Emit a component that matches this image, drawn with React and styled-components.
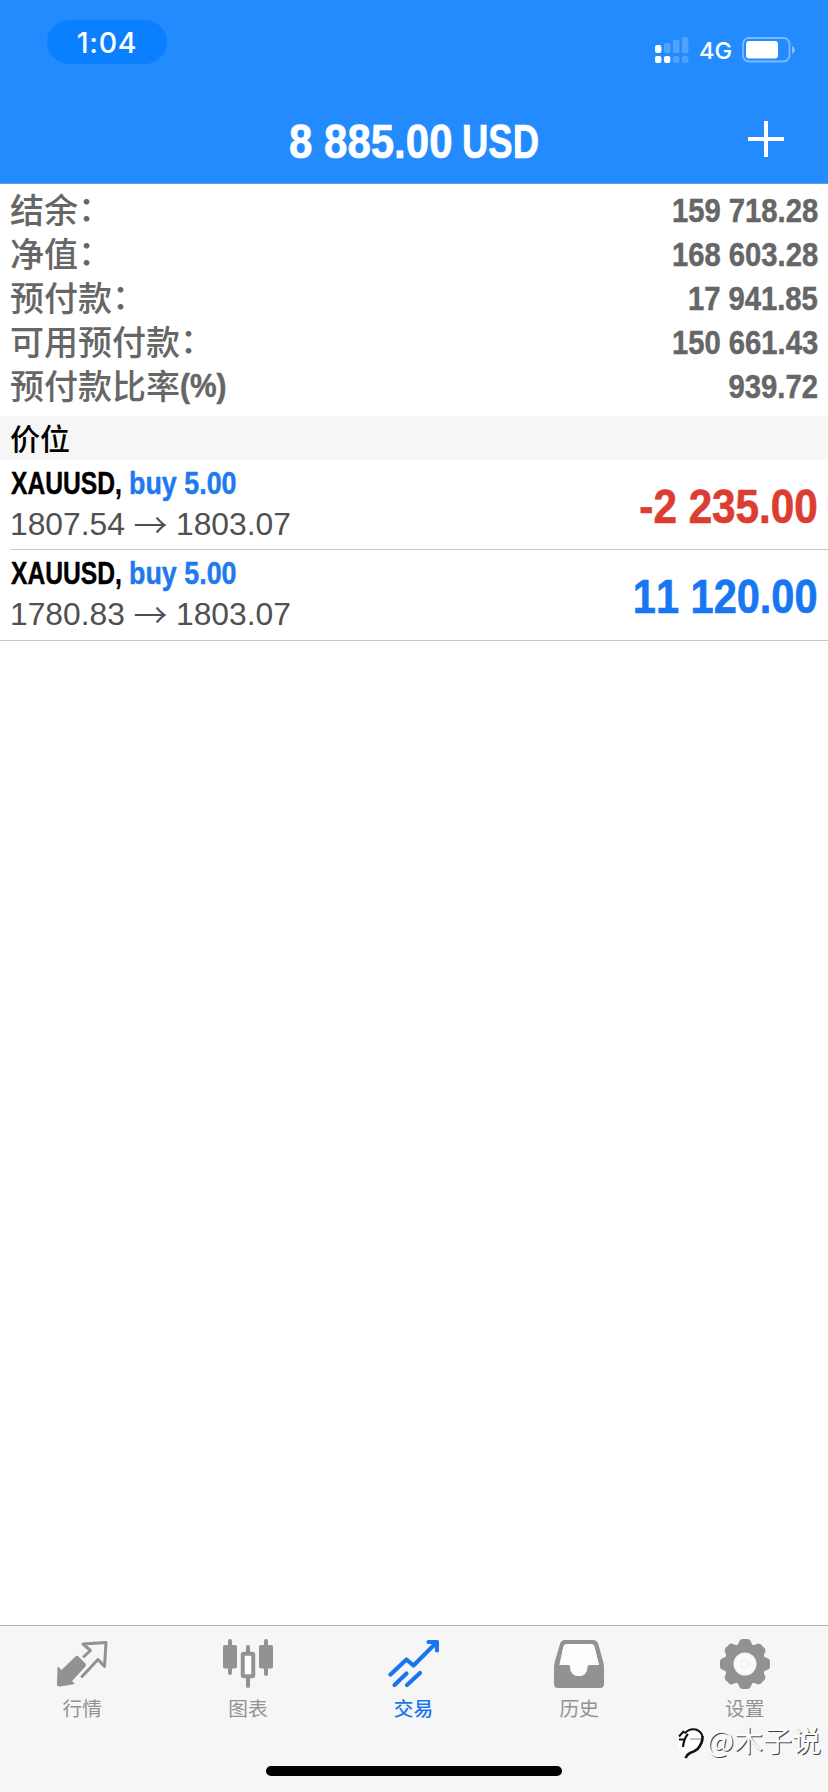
import React from "react";
import styled, { createGlobalStyle } from "styled-components";

const GlobalStyle = createGlobalStyle`
  body { margin: 0; background: #fff; }
  * { box-sizing: border-box; }
`;

const CJK = `"Noto Sans CJK SC", sans-serif`;
const SANS = `"Liberation Sans", "Noto Sans CJK SC", sans-serif`;
const UI = `Inter, "Noto Sans CJK SC", sans-serif`;

const Screen = styled.div`
  position: relative;
  width: 828px;
  height: 1792px;
  display: flex;
  flex-direction: column;
  overflow: hidden;
  background: #fff;
  font-family: ${SANS};
`;

const Condensed = styled.span`
  display: inline-block;
  width: ${(p) => (p.$width ? `${p.$width}px` : "auto")};
  font-family: ${SANS};
  font-weight: 700;
  font-size: ${(p) => p.$size}px;
  font-kerning: none;
  line-height: 1;
  white-space: pre;
  color: ${(p) => p.$color || "inherit"};
  -webkit-text-stroke: ${(p) => p.$size / 70}px currentColor;
  transform: scaleX(${(p) => p.$scale || 0.88});
  transform-origin: ${(p) => p.$origin || "left"} center;
`;

const Header = styled.header`
  height: 184px;
  background: #248bff;
  border-bottom: 1px solid #5d9fe6;
  color: #fff;
  display: flex;
  flex-direction: column;
`;

const StatusBar = styled.div`
  height: 96px;
  padding: 20px 32px 0 47px;
  display: flex;
  justify-content: space-between;
  align-items: flex-start;
  font-family: ${UI};
`;

const TimePill = styled.div`
  width: 120px;
  height: 44px;
  border-radius: 22px;
  background: #0a7fff;
  display: flex;
  align-items: center;
  justify-content: center;
  font-size: 28.5px;
  font-weight: 450;
  letter-spacing: 0.7px;
`;

const StatusIcons = styled.div`
  display: flex;
  align-items: center;
  height: 28px;
  margin-top: 16px;
`;

const Network = styled.span`
  font-size: 23.5px;
  font-weight: 450;
  line-height: 28px;
  margin: 2px 10px 0 10px;
`;

const NavBar = styled.div`
  flex: 1;
  display: grid;
  grid-template-columns: 100px 1fr 100px;
  align-items: center;
  justify-items: center;
`;

const NavTitle = styled.div`
  grid-column: 2;
  width: 250px;
  padding-top: 5px;
  white-space: nowrap;
`;

const AddButton = styled.button`
  border: 0;
  padding: 0;
  background: none;
  width: 36px;
  height: 36px;
  margin: 0 24px 1px 0;
  display: block;
  svg { display: block; }
`;

const Summary = styled.section`
  height: 232px;
  padding: 4px 10px 0;
  color: #666;
`;

const SummaryRow = styled.div`
  height: 44px;
  display: flex;
  align-items: center;
  justify-content: space-between;
`;

const SummaryLabel = styled.span`
  display: flex;
  align-items: center;
  font-family: ${CJK};
  font-size: 34px;
  font-weight: 500;
  line-height: 44px;
  height: 44px;
  margin-top: -2px;
`;

const Colon = styled.span`
  margin: -5px 0 0 0;
`;

const SectionTitle = styled.h2`
  margin: 0;
  height: 44px;
  padding-left: 10px;
  background: #f6f6f6;
  font: 500 30px/42px ${CJK};
  color: #000;
`;

const Position = styled.article`
  height: ${(p) => (p.$last ? 91 : 90)}px;
  margin-left: ${(p) => (p.$last ? 0 : 11)}px;
  padding: 7px 10px 0 ${(p) => (p.$last ? 11 : 0)}px;
  border-bottom: 1px solid #c6c6c8;
  display: flex;
  justify-content: space-between;
`;

const PositionInfo = styled.div`
  display: flex;
  flex-direction: column;
  align-items: flex-start;
`;

const Instrument = styled.div`
  display: flex;
`;

const Prices = styled.div`
  display: flex;
  align-items: center;
  margin-top: 8px;
  margin-left: -1px;
  font-size: 31.8px;
  font-kerning: none;
  line-height: 34px;
  color: #505050;
`;

const Arrow = styled.span`
  display: flex;
  justify-content: center;
  width: 51px;
  font-family: ${CJK};
  font-weight: 350;
  font-size: 34px;
`;

const Profit = styled.div`
  padding-top: 16px;
`;

const Spacer = styled.main`
  flex: 1;
`;

const TabBar = styled.nav`
  height: 167px;
  border-top: 1px solid #b2b2b2;
  background: #f6f6f6;
  display: flex;
  flex-direction: column;
  align-items: center;
`;

const Tabs = styled.div`
  width: 100%;
  height: 140px;
  display: grid;
  grid-template-columns: repeat(5, 1fr);
`;

const Tab = styled.div`
  display: flex;
  flex-direction: column;
  align-items: center;
  padding: 12px 1px 0 0;
  color: ${(p) => (p.$active ? "#1a76ec" : "#929292")};
  font: ${(p) => (p.$active ? 500 : 400)} 19.7px/28px ${CJK};
  svg { display: block; margin-bottom: 4px; }
`;

const HomeIndicator = styled.div`
  width: 296px;
  height: 10px;
  border-radius: 5px;
  background: #000;
`;

const Watermark = styled.div`
  position: absolute;
  right: 7px;
  bottom: 32px;
  display: flex;
  align-items: center;
  gap: 1px;
  font: 400 29px/40px ${CJK};
  color: #fcfcfc;
  text-shadow: 1px 1px 0 #444;
  svg { margin-top: 8px; }
`;

const SignalIcon = () => (
  <svg width="34" height="28" viewBox="0 0 34 28" fill="#fff">
    <rect x="0" y="9" width="6.4" height="8" rx="2" />
    <g opacity=".2">
      <rect x="9" y="7" width="6.4" height="10" rx="1.5" />
      <rect x="18" y="4" width="6.4" height="13" rx="1.5" />
      <rect x="27" y="1" width="6.4" height="16" rx="1.5" />
      <rect x="18" y="20" width="6.4" height="7" rx="2" />
      <rect x="27" y="20" width="6.4" height="7" rx="2" />
    </g>
    <rect x="0" y="20" width="6.4" height="7" rx="2" />
    <rect x="9" y="20" width="6.4" height="7" rx="2" />
  </svg>
);

const BatteryIcon = () => (
  <svg width="54" height="26" viewBox="0 0 54 26">
    <rect x="1" y="1" width="46.5" height="23.5" rx="6" fill="none" stroke="#fff" strokeOpacity=".4" strokeWidth="1.8" />
    <rect x="4" y="4" width="32" height="17.5" rx="3" fill="#fff" />
    <path d="M50 9 Q53 10.5 53 13 T50 17Z" fill="#fff" fillOpacity=".45" />
  </svg>
);

const PlusIcon = () => (
  <svg width="36" height="36" viewBox="0 0 36 36" stroke="#fff" strokeWidth="4">
    <path d="M18 0V36M0 18H36" />
  </svg>
);

const QuotesIcon = () => (
  <svg width="52" height="52" viewBox="0 0 52 52">
    <path d="M1.500 29.500Q1.500 28 3 29.500L5.500 32 19.500 18.500Q21 17 22.500 18.500L29.500 25.500Q30.500 27 29.500 28.500L16 43 19 46 4 48.500Q1 49 1 46Z" fill="currentColor" />
    <path d="M28 18.500 34.500 12.500 27 6 50 4.500 48.500 28.500 42 21.500 26 38.500" fill="none" stroke="currentColor" strokeWidth="3" strokeLinecap="round" strokeLinejoin="round" />
  </svg>
);

const ChartIcon = () => (
  <svg width="52" height="52" viewBox="0 0 52 52" fill="currentColor">
    <rect x="1" y="7" width="14" height="23.500" rx="2" />
    <rect x="6" y="1" width="4" height="36" rx="2" />
    <rect x="37" y="7" width="14" height="23.500" rx="2" />
    <rect x="42" y="1" width="4" height="37" rx="2" />
    <rect x="24" y="7" width="4" height="10" rx="2" />
    <rect x="24" y="38" width="4" height="12" rx="2" />
    <rect x="20.750" y="15.750" width="10.500" height="22.500" rx="1" fill="#fff" stroke="currentColor" strokeWidth="4" />
  </svg>
);

const TradeIcon = () => (
  <svg width="52" height="52" viewBox="0 0 52 52" fill="none" stroke="currentColor" strokeWidth="4.200" strokeLinecap="round" strokeLinejoin="round">
    <path d="M3.500 36.500 19.500 21.500 26.500 27.500 49.500 4.500M41.500 4H50V12.500" />
    <path d="M7.500 47 19.500 35.500M20 47 33 35" />
  </svg>
);

const HistoryIcon = () => (
  <svg width="52" height="52" viewBox="0 0 52 52">
    <path fill="currentColor" fillRule="evenodd" d="M12 2H40Q44 2 45.300 6L50 23Q51 26 51 30V46Q51 50 47 50H5Q1 50 1 46V30Q1 26 2 23L7 6Q8 2 12 2ZM14 6Q11 6 10.300 9L6.500 27H16Q17 27 17 28.500Q17.500 38 26 38Q34 38 34.500 28.500Q34.500 27 36 27H46L41.500 9Q41 6 38 6Z" />
    <path fill="#fff" fillOpacity=".8" d="M14 6Q11 6 10.300 9L6.500 27H16Q17 27 17 28.500Q17.500 38 26 38Q34 38 34.500 28.500Q34.500 27 36 27H46L41.500 9Q41 6 38 6Z" />
  </svg>
);

const SettingsIcon = () => (
  <svg width="52" height="52" viewBox="-26 -26 52 52" fill="currentColor">
    <circle r="16" fill="none" stroke="currentColor" strokeWidth="9" />
    {[0, 45, 90, 135, 180, 225, 270, 315].map((a) => (
      <path key={a} transform={`rotate(${a})`} d="M-9 -17Q-7 -19 -6 -22Q-5 -25 -2.500 -25H2.500Q5 -25 6 -22Q7 -19 9 -17Z" />
    ))}
    <circle r="10" fill="#fbfbfb" />
    <circle r="4" fill="none" stroke="#eee" />
  </svg>
);

const WatermarkLogo = () => (
  <svg width="30" height="34" viewBox="0 0 30 34" fill="none">
    <circle cx="14.500" cy="14.500" r="13" fill="#fff" />
    <path d="M3 10.500 8 5M8.500 7.500Q13 2 20 3.500Q26 6 26.500 11" stroke="#111" strokeWidth="2" />
    <path d="M26.500 10Q27 17 21.500 23Q19 25.500 14 27Q11 28.500 9.500 32" stroke="#111" strokeWidth="2.600" />
    <path d="M12 8Q8 12 7 21M3 13.500H9" stroke="#111" strokeWidth="2.200" />
    <path d="M14 13H25" stroke="#888" strokeWidth="1" />
  </svg>
);

const summary = [
  ["结余", "：", "159 718.28"],
  ["净值", "：", "168 603.28"],
  ["预付款", "：", "17 941.85"],
  ["可用预付款", "：", "150 661.43"],
  ["预付款比率", "(%)", "939.72"],
];

const positions = [
  { open: "1807.54", profit: "-2 235.00", color: "#dc3d31", scale: 0.88 },
  { open: "1780.83", profit: "11 120.00", color: "#1777f0", scale: 0.865 },
];

const tabs = [
  ["行情", QuotesIcon],
  ["图表", ChartIcon],
  ["交易", TradeIcon],
  ["历史", HistoryIcon],
  ["设置", SettingsIcon],
];

export default function App() {
  return (
    <Screen>
      <GlobalStyle />
      <Header>
        <StatusBar>
          <TimePill>1:04</TimePill>
          <StatusIcons>
            <SignalIcon />
            <Network>4G</Network>
            <BatteryIcon />
          </StatusIcons>
        </StatusBar>
        <NavBar>
          <NavTitle>
            <Condensed $size={48} $width={173} $scale={0.875}>8 885.00</Condensed>
            <Condensed $size={48} $width={76} $scale={0.76}>USD</Condensed>
          </NavTitle>
          <AddButton aria-label="add"><PlusIcon /></AddButton>
        </NavBar>
      </Header>
      <Summary>
        {summary.map(([label, suffix, value]) => (
          <SummaryRow key={label}>
            <SummaryLabel>
              {label}
              {suffix === "：" ? (
                <Colon>{suffix}</Colon>
              ) : (
                <Condensed $size={34}>{suffix}</Condensed>
              )}
            </SummaryLabel>
            <Condensed $size={33} $scale={0.885} $origin="right">{value}</Condensed>
          </SummaryRow>
        ))}
      </Summary>
      <SectionTitle>价位</SectionTitle>
      {positions.map((p, i) => (
        <Position key={p.open} $last={i === positions.length - 1}>
          <PositionInfo>
            <Instrument>
              <Condensed $size={32} $scale={0.77} $width={117.500} $color="#000">XAUUSD,</Condensed>
              <Condensed $size={32} $scale={0.84} $width={108} $color="#2079ee">buy 5.00</Condensed>
            </Instrument>
            <Prices>
              {p.open}
              <Arrow>→</Arrow>
              1803.07
            </Prices>
          </PositionInfo>
          <Profit>
            <Condensed $size={48} $scale={p.scale} $origin="right" $color={p.color}>{p.profit}</Condensed>
          </Profit>
        </Position>
      ))}
      <Spacer />
      <TabBar>
        <Tabs>
          {tabs.map(([name, Icon]) => (
            <Tab key={name} $active={name === "交易"}>
              <Icon />
              {name}
            </Tab>
          ))}
        </Tabs>
        <HomeIndicator />
      </TabBar>
      <Watermark>
        <WatermarkLogo />
        @木子说
      </Watermark>
    </Screen>
  );
}
